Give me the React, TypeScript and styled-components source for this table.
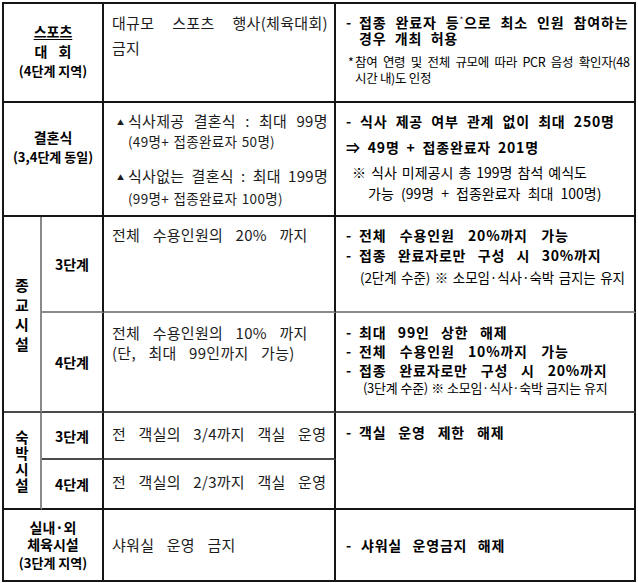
import styled, { createGlobalStyle } from 'styled-components';

type Tone = 'dark' | 'mid' | 'light';

const tones: Record<Tone, string> = {
  dark: '#151515',
  mid: '#4a4a4a',
  light: '#8a8a8a',
};

const GlobalStyle = createGlobalStyle`
  html, body {
    margin: 0;
    padding: 0;
    background: #fff;
  }
  body {
    font-family: 'Noto Sans CJK KR', 'Noto Sans', sans-serif;
    color: #111;
  }
`;

const Page = styled.div`
  padding: 2px 0 0 2px;
`;

const Board = styled.div`
  display: grid;
  width: max-content;
  grid-template-columns: 38px 62px 232px 300px;
  grid-template-rows: 99px 114px 96px 100px 47px 50px 72px;
  grid-template-areas:
    'h1 h1 t1 r1'
    'h2 h2 t2 r2'
    'v3 s3 t3 r3'
    'v3 s4 t4 r4'
    'v5 s5 t5 r5'
    'v5 s6 t6 r5'
    'h7 h7 t7 r7';
  border-top: 2px solid ${tones.dark};
  border-left: 2px solid ${tones.dark};
`;

const Cell = styled.div<{ $area: string; $right?: Tone; $bottom?: Tone }>`
  grid-area: ${({ $area }) => $area};
  box-sizing: border-box;
  display: flex;
  flex-direction: column;
  min-width: 0;
  border-right: 2px solid ${({ $right }) => tones[$right ?? 'dark']};
  border-bottom: 2px solid ${({ $bottom }) => tones[$bottom ?? 'dark']};
`;

const HeadCell = styled(Cell)<{ $shift?: number }>`
  align-items: center;
  justify-content: center;
  padding-bottom: ${({ $shift }) => $shift ?? 0}px;
  font-weight: 700;
  color: #000;
  text-align: center;
`;

const TextCell = styled(Cell)<{ $top?: number; $center?: boolean; $shift?: number }>`
  padding: ${({ $top }) => $top ?? 0}px 6px ${({ $shift }) => $shift ?? 0}px 8px;
  justify-content: ${({ $center }) => ($center ? 'center' : 'flex-start')};
  color: #1c1c1c;
  letter-spacing: 0.3px;
`;

const ResultCell = styled(Cell)<{ $top?: number; $center?: boolean }>`
  padding: ${({ $top }) => $top ?? 0}px 4px 0 10px;
  justify-content: ${({ $center }) => ($center ? 'center' : 'flex-start')};
  color: #000;
`;

const Line = styled.div<{
  $size?: number;
  $bold?: boolean;
  $lh?: number;
  $indent?: number;
  $mt?: number;
  $ws?: number;
  $ls?: number;
  $under?: boolean;
}>`
  font-size: ${({ $size }) => $size ?? 15}px;
  font-weight: ${({ $bold }) => ($bold ? 700 : 400)};
  line-height: ${({ $lh }) => $lh ?? 20}px;
  padding-left: ${({ $indent }) => $indent ?? 0}px;
  margin-top: ${({ $mt }) => $mt ?? 0}px;
  word-spacing: ${({ $ws }) => $ws ?? 0}px;
  ${({ $ls }) => ($ls !== undefined ? `letter-spacing: ${$ls}px;` : '')}
  text-decoration: ${({ $under }) => ($under ? 'underline' : 'none')};
  text-underline-offset: 2px;
  white-space: nowrap;
`;

const Dash = styled.span<{ $w?: number }>`
  display: inline-block;
  width: ${({ $w }) => $w ?? 13}px;
  margin-left: -${({ $w }) => $w ?? 13}px;
  word-spacing: 0;
  letter-spacing: 0;
`;

const Bullet = styled.span`
  display: inline-block;
  width: 13px;
  margin-left: -13px;
  padding-left: 2px;
  box-sizing: border-box;
  font-size: 7px;
  vertical-align: 2px;
  word-spacing: 0;
`;

const Star = styled.span`
  font-size: 8px;
  vertical-align: 5px;
  font-weight: 400;
`;

const Stack = styled.div<{ $lh: number; $size: number }>`
  display: flex;
  flex-direction: column;
  align-items: center;
  font-size: ${({ $size }) => $size}px;
  font-weight: 700;
  line-height: ${({ $lh }) => $lh}px;
`;

const VerticalLabel = ({ text, lh, size }: { text: string; lh: number; size: number }) => (
  <Stack $lh={lh} $size={size}>
    {text.split('').map((ch, i) => (
      <span key={i}>{ch}</span>
    ))}
  </Stack>
);

const CONTENT_WS = 8.8;
const BOLD_LS = 0.8;

export default function App() {
  return (
    <Page>
      <GlobalStyle />
      <Board>
        {/* 스포츠 대회 */}
        <HeadCell $area="h1" $shift={3}>
          <Line $bold $size={14} $under>스포츠</Line>
          <Line $bold $size={14} $ws={8}>대 회</Line>
          <Line $bold $size={13}>(4단계 지역)</Line>
        </HeadCell>
        <TextCell $area="t1" $top={6}>
          <Line $lh={25} $ws={14.3}>대규모 스포츠 행사(체육대회)</Line>
          <Line $lh={25}>금지</Line>
        </TextCell>
        <ResultCell $area="r1" $top={8}>
          <Line $bold $size={14} $lh={16} $indent={13} $ws={5.2} $ls={BOLD_LS}>
            <Dash>-</Dash>접종 완료자 등<Star>*</Star>으로 최소 인원 참여하는
          </Line>
          <Line $bold $size={14} $lh={16} $indent={13} $ws={4.5} $ls={BOLD_LS}>경우 개최 허용</Line>
          <Line $size={12.5} $lh={16} $mt={8} $indent={9} $ws={3} $ls={-0.3}>
            <Dash $w={7}>*</Dash>참여 연령 및 전체 규모에 따라 PCR 음성 확인자(48
          </Line>
          <Line $size={12.5} $lh={16} $indent={9} $ls={-0.3}>시간 내)도 인정</Line>
        </ResultCell>

        {/* 결혼식 */}
        <HeadCell $area="h2" $shift={24}>
          <Line $bold $size={14}>결혼식</Line>
          <Line $bold $size={13}>(3,4단계 동일)</Line>
        </HeadCell>
        <TextCell $area="t2" $top={8}>
          <Line $indent={16} $ws={5.6}>
            <Bullet>▲</Bullet>식사제공 결혼식 : 최대 99명
          </Line>
          <Line $size={13.5} $lh={18} $indent={16} $ws={1.3}>(49명+ 접종완료자 50명)</Line>
          <Line $lh={22} $mt={15} $indent={16} $ws={3.5}>
            <Bullet>▲</Bullet>식사없는 결혼식 : 최대 199명
          </Line>
          <Line $size={13.5} $lh={20} $indent={16} $ws={1.3}>(99명+ 접종완료자 100명)</Line>
        </TextCell>
        <ResultCell $area="r2" $top={8}>
          <Line $bold $size={14} $indent={14} $ws={4.3} $ls={BOLD_LS}>
            <Dash $w={14}>-</Dash>식사 제공 여부 관계 없이 최대 250명
          </Line>
          <Line $bold $size={14} $mt={6} $ws={3} $ls={BOLD_LS}>⇒ 49명 + 접종완료자 201명</Line>
          <Line $size={14} $lh={21} $mt={5} $indent={6} $ws={1.9}>※ 식사 미제공시 총 199명 참석 예식도</Line>
          <Line $size={14} $lh={21} $indent={22} $ws={4}>가능 (99명 + 접종완료자 최대 100명)</Line>
        </ResultCell>

        {/* 종교시설 */}
        <HeadCell $area="v3" $right="light" $bottom="mid">
          <VerticalLabel text="종교시설" lh={19.5} size={15} />
        </HeadCell>
        <HeadCell $area="s3" $bottom="light">
          <Line $bold $size={14}>3단계</Line>
        </HeadCell>
        <TextCell $area="t3" $top={7} $bottom="light">
          <Line $lh={22} $ws={CONTENT_WS}>전체 수용인원의 20% 까지</Line>
        </TextCell>
        <ResultCell $area="r3" $top={8} $bottom="light">
          <Line $bold $size={14} $indent={13} $ws={9.5} $ls={BOLD_LS}>
            <Dash>-</Dash>전체 수용인원 20%까지 가능
          </Line>
          <Line $bold $size={14} $indent={13} $ws={7.5} $ls={BOLD_LS}>
            <Dash>-</Dash>접종 완료자로만 구성 시 30%까지
          </Line>
          <Line $size={13.5} $lh={18} $mt={3} $indent={14} $ws={1.7} $ls={-0.1}>
            (2단계 수준) ※ 소모임·식사·숙박 금지는 유지
          </Line>
        </ResultCell>

        <HeadCell $area="s4" $bottom="mid">
          <Line $bold $size={14}>4단계</Line>
        </HeadCell>
        <TextCell $area="t4" $top={10} $bottom="mid">
          <Line $ws={CONTENT_WS}>전체 수용인원의 10% 까지</Line>
          <Line $ws={CONTENT_WS}>(단, 최대 99인까지 가능)</Line>
        </TextCell>
        <ResultCell $area="r4" $top={10} $bottom="mid">
          <Line $bold $size={14} $lh={19} $indent={13} $ws={7.5} $ls={BOLD_LS}>
            <Dash>-</Dash>최대 99인 상한 해제
          </Line>
          <Line $bold $size={14} $lh={19} $indent={13} $ws={9.5} $ls={BOLD_LS}>
            <Dash>-</Dash>전체 수용인원 10%까지 가능
          </Line>
          <Line $bold $size={14} $lh={19} $indent={13} $ws={9} $ls={BOLD_LS}>
            <Dash>-</Dash>접종 완료자로만 구성 시 20%까지
          </Line>
          <Line $size={13} $lh={16} $indent={17} $ws={0.6} $ls={-0.3}>
            (3단계 수준) ※ 소모임·식사·숙박 금지는 유지
          </Line>
        </ResultCell>

        {/* 숙박시설 */}
        <HeadCell $area="v5" $right="light">
          <VerticalLabel text="숙박시설" lh={16} size={14.5} />
        </HeadCell>
        <HeadCell $area="s5" $bottom="mid">
          <Line $bold $size={14}>3단계</Line>
        </HeadCell>
        <TextCell $area="t5" $center $shift={4} $bottom="mid">
          <Line $ws={CONTENT_WS}>전 객실의 3/4까지 객실 운영</Line>
        </TextCell>
        <HeadCell $area="s6">
          <Line $bold $size={14}>4단계</Line>
        </HeadCell>
        <TextCell $area="t6" $center $shift={5}>
          <Line $ws={CONTENT_WS}>전 객실의 2/3까지 객실 운영</Line>
        </TextCell>
        <ResultCell $area="r5" $top={9}>
          <Line $bold $size={14} $indent={13} $ws={8} $ls={BOLD_LS}>
            <Dash>-</Dash>객실 운영 제한 해제
          </Line>
        </ResultCell>

        {/* 실내·외 체육시설 */}
        <HeadCell $area="h7">
          <Line $bold $size={14} $lh={17.5}>실내·외</Line>
          <Line $bold $size={14} $lh={17.5}>체육시설</Line>
          <Line $bold $size={13} $lh={17.5}>(3단계 지역)</Line>
        </HeadCell>
        <TextCell $area="t7" $center>
          <Line $ws={CONTENT_WS}>샤워실 운영 금지</Line>
        </TextCell>
        <ResultCell $area="r7" $center>
          <Line $bold $size={14} $indent={15} $ws={6.5} $ls={BOLD_LS}>
            <Dash $w={15}>-</Dash>샤워실 운영금지 해제
          </Line>
        </ResultCell>
      </Board>
    </Page>
  );
}
